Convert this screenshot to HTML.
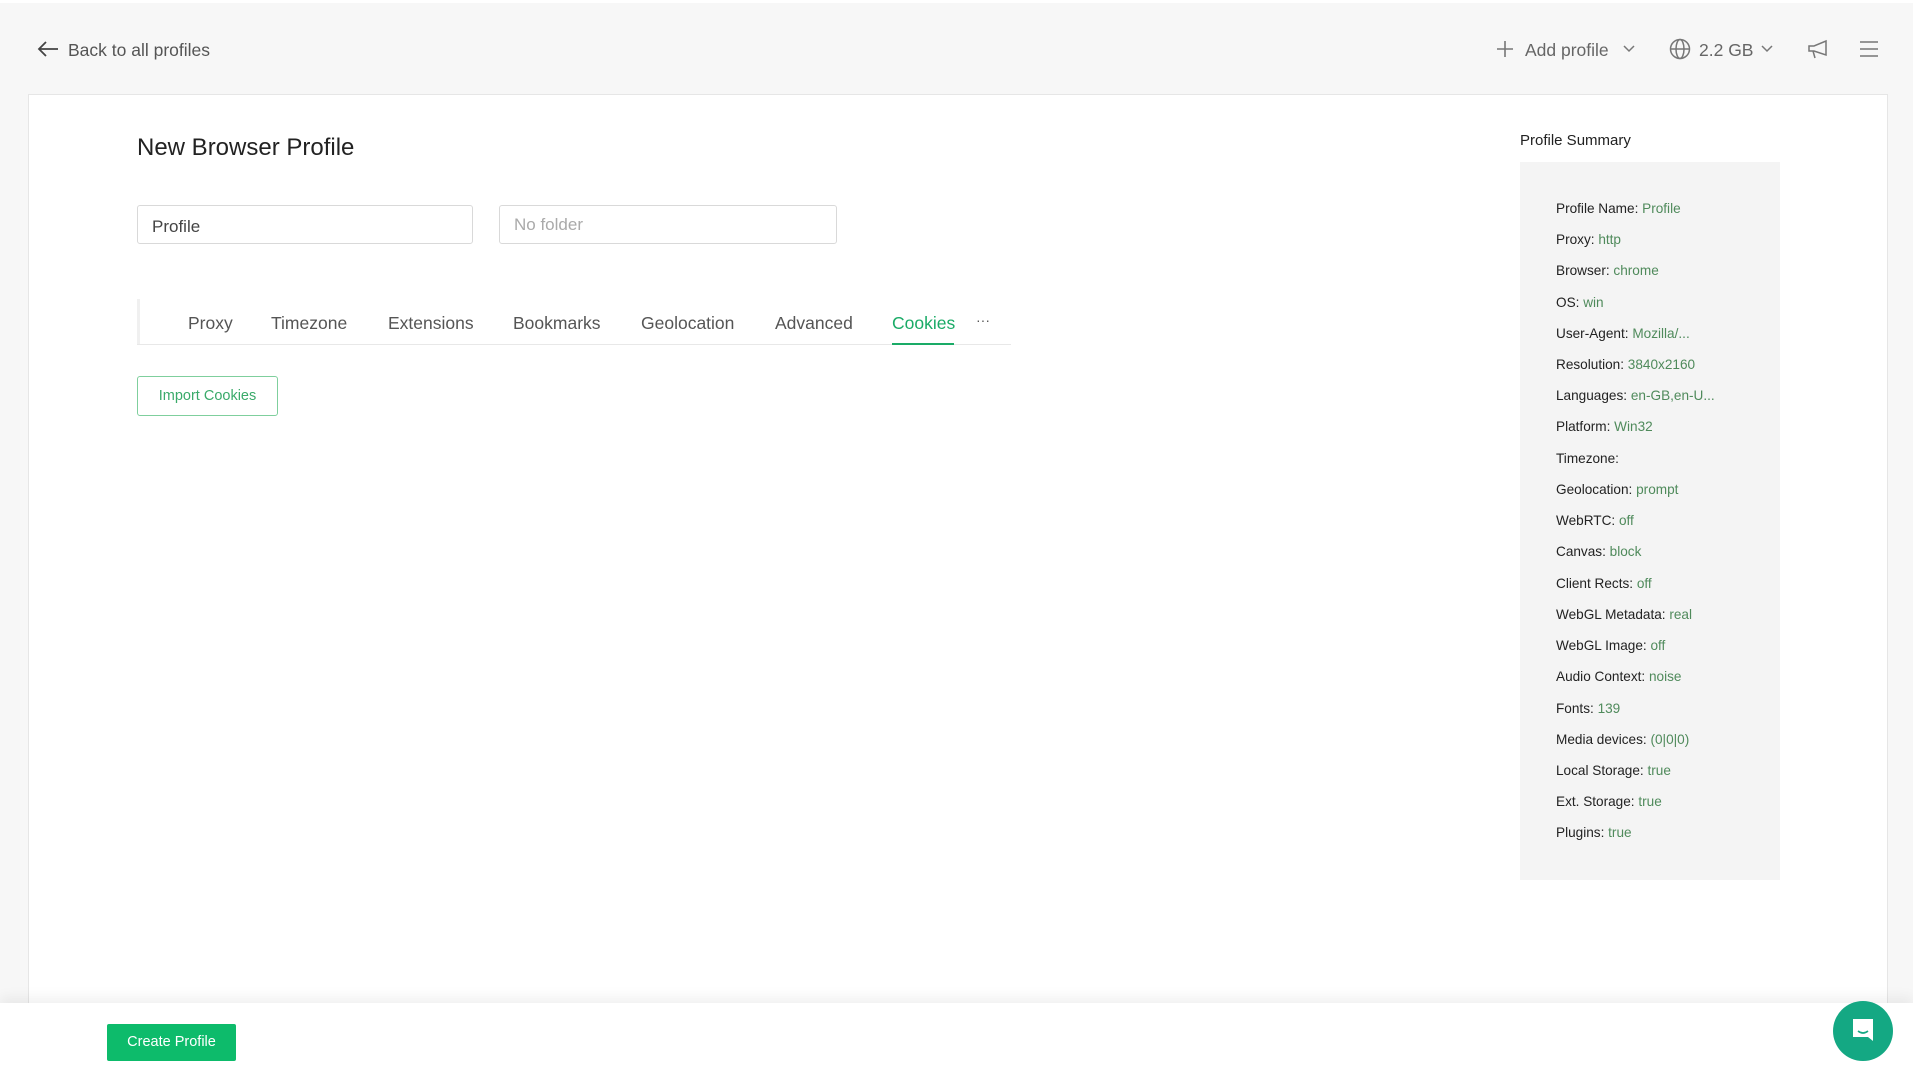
<!DOCTYPE html>
<html><head><meta charset="utf-8"><style>
*{margin:0;padding:0;box-sizing:border-box}
body{width:1913px;height:1079px;background:#f7f7f7;font-family:"Liberation Sans",Arial,sans-serif;position:relative;overflow:hidden;color:#333}
.a{position:absolute;white-space:nowrap}
.card{position:absolute;left:28px;top:94px;width:1860px;height:920px;background:#fff;border:1px solid #e6e6e6}
.foot{position:absolute;left:0;top:1003px;width:1913px;height:76px;background:#fff;box-shadow:0 -6px 12px rgba(0,0,0,0.06)}
.inp{position:absolute;height:39px;border:1px solid #d9d9d9;border-radius:3px;font-size:17px;padding:11px 14px;color:#444}
.tab{position:absolute;top:313px;font-size:17.5px;color:#555}
.lbl{position:absolute;left:1556px;font-size:13.6px;color:#222}
.lbl span{color:#4f8a5b}
.hd{font-size:17.5px;color:#666;top:40px}
</style></head><body>
<div style="position:absolute;left:0;top:0;width:1913px;height:3px;background:#fff"></div>
<svg class="a" style="left:36px;top:40px" width="24" height="18" viewBox="0 0 24 18"><path d="M22 9H3M10 2L3 9l7 7" stroke="#444" stroke-width="1.8" fill="none"/></svg>
<div class="a hd" style="left:68px;color:#555">Back to all profiles</div>

<svg class="a" style="left:1496px;top:40px" width="18" height="18"><path d="M9 1v16M1 9h16" stroke="#777" stroke-width="1.6"/></svg>
<div class="a hd" style="left:1525px">Add profile</div>
<svg class="a" style="left:1623px;top:45px" width="12" height="8"><path d="M1 1l5 5 5-5" stroke="#777" stroke-width="1.5" fill="none"/></svg>
<svg class="a" style="left:1669px;top:38px" width="22" height="22" viewBox="0 0 22 22"><g stroke="#777" stroke-width="1.5" fill="none"><circle cx="11" cy="11" r="9.5"/><ellipse cx="11" cy="11" rx="4" ry="9.5"/><path d="M1.5 11h19"/></g></svg>
<div class="a hd" style="left:1699px">2.2 GB</div>
<svg class="a" style="left:1761px;top:45px" width="12" height="8"><path d="M1 1l5 5 5-5" stroke="#777" stroke-width="1.5" fill="none"/></svg>
<svg class="a" style="left:1807px;top:38px" width="22" height="22" viewBox="0 0 22 22"><path d="M2 8h5l12-5v14L7 13H2zM6 13l2 7" stroke="#777" stroke-width="1.5" fill="none"/></svg>
<svg class="a" style="left:1859px;top:40px" width="20" height="18"><path d="M1 2h18M1 9h18M1 16h18" stroke="#777" stroke-width="1.5"/></svg>

<div class="card"></div>
<div class="a" style="left:137px;top:134px;font-size:24px;color:#222">New Browser Profile</div>
<div class="inp" style="left:137px;top:205px;width:336px">Profile</div>
<div class="inp" style="left:499px;top:205px;width:338px;color:#aaa;padding-top:9px">No folder</div>

<div class="a" style="left:137px;top:299px;width:3px;height:46px;background:#f0f0f0"></div>
<div class="a" style="left:137px;top:344px;width:874px;height:1px;background:#e8e8e8"></div>
<div class="tab" style="left:188px">Proxy</div>
<div class="tab" style="left:271px">Timezone</div>
<div class="tab" style="left:388px">Extensions</div>
<div class="tab" style="left:513px">Bookmarks</div>
<div class="tab" style="left:641px">Geolocation</div>
<div class="tab" style="left:775px">Advanced</div>
<div class="tab" style="left:892px;color:#1aab67">Cookies</div>
<div class="a" style="left:892px;top:343px;width:62px;height:2px;background:#1aab67"></div>
<div class="tab" style="left:976px;font-size:14px;top:312px">···</div>

<div class="a" style="left:137px;top:376px;width:141px;height:40px;border:1px solid #7fcf9d;border-radius:3px;color:#3aaa6a;font-size:14.5px;text-align:center;line-height:38px">Import Cookies</div>

<div class="a" style="left:1520px;top:132px;font-size:15px;color:#222">Profile Summary</div>
<div class="a" style="left:1520px;top:162px;width:260px;height:718px;background:#f4f4f4"></div>
<div class="lbl" style="top:201px">Profile Name: <span>Profile</span></div>
<div class="lbl" style="top:232px">Proxy: <span>http</span></div>
<div class="lbl" style="top:263px">Browser: <span>chrome</span></div>
<div class="lbl" style="top:295px">OS: <span>win</span></div>
<div class="lbl" style="top:326px">User-Agent: <span>Mozilla/...</span></div>
<div class="lbl" style="top:357px">Resolution: <span>3840x2160</span></div>
<div class="lbl" style="top:388px">Languages: <span>en-GB,en-U...</span></div>
<div class="lbl" style="top:419px">Platform: <span>Win32</span></div>
<div class="lbl" style="top:451px">Timezone:</div>
<div class="lbl" style="top:482px">Geolocation: <span>prompt</span></div>
<div class="lbl" style="top:513px">WebRTC: <span>off</span></div>
<div class="lbl" style="top:544px">Canvas: <span>block</span></div>
<div class="lbl" style="top:576px">Client Rects: <span>off</span></div>
<div class="lbl" style="top:607px">WebGL Metadata: <span>real</span></div>
<div class="lbl" style="top:638px">WebGL Image: <span>off</span></div>
<div class="lbl" style="top:669px">Audio Context: <span>noise</span></div>
<div class="lbl" style="top:701px">Fonts: <span>139</span></div>
<div class="lbl" style="top:732px">Media devices: <span>(0|0|0)</span></div>
<div class="lbl" style="top:763px">Local Storage: <span>true</span></div>
<div class="lbl" style="top:794px">Ext. Storage: <span>true</span></div>
<div class="lbl" style="top:825px">Plugins: <span>true</span></div>

<div class="foot"></div>
<div class="a" style="left:107px;top:1024px;width:129px;height:37px;background:#0dbb6b;border-radius:2px;color:#fff;font-size:14.5px;text-align:center;line-height:37px">Create Profile</div>
<div class="a" style="left:1833px;top:1001px;width:60px;height:60px;border-radius:50%;background:#14a883"></div>
<svg class="a" style="left:1850px;top:1017px" width="26" height="28" viewBox="0 0 26 28"><path d="M3 2h20v22l-5-4H3z" fill="#fff"/><path d="M8 14q5 4 10 0" stroke="#14a883" stroke-width="1.6" fill="none"/></svg>
</body></html>
